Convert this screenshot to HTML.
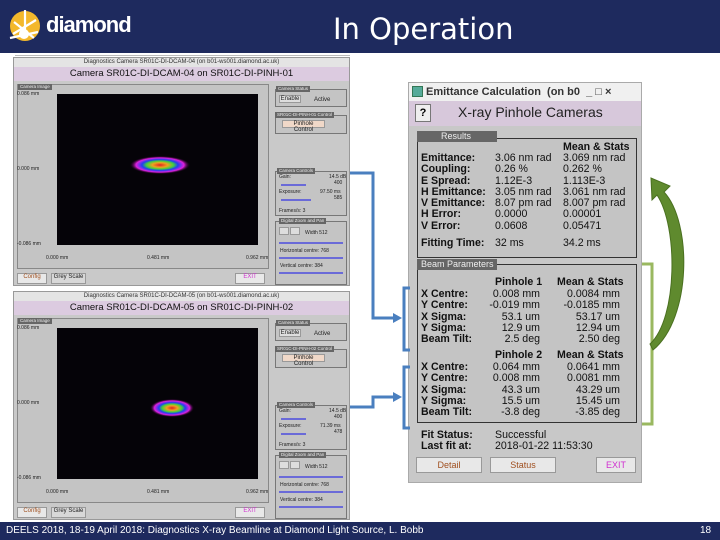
<!DOCTYPE html>
<html><head><meta charset="utf-8"><style>
*{margin:0;padding:0;box-sizing:border-box}
body{width:720px;height:540px;position:relative;background:#fff;font-family:"Liberation Sans",sans-serif;overflow:hidden}
.a{position:absolute}
.hdr{left:0;top:0;width:720px;height:53px;background:#1e2a5e}
.ftr{left:0;top:522px;width:720px;height:18px;background:#1e2a5e;color:#fff;font-size:10px;line-height:18px}
.cam{position:absolute;width:337px;height:229px;background:#c9c9c9;border:1px solid #999;font-size:5px;color:#222}
.cam .tb{position:absolute;left:0;top:0;width:100%;height:9px;background:#e4e4e4;font-size:6px;text-align:center;line-height:9px;color:#333}
.cam .ph{position:absolute;left:0;top:9px;width:100%;height:14px;background:#dccbe0;font-size:9.5px;text-align:center;line-height:14px;color:#111}
.cam .img{position:absolute;left:43px;top:36px;width:201px;height:151px;background:#050308}
.cam .grp{position:absolute;border:1px solid #777;background:#c4c4c4}
.cam .lab{position:absolute;background:#666;color:#eee;font-size:4.5px;padding:0 2px;height:6px;line-height:6px}
.sl{position:absolute;height:2px;background:#6a6ad8}
.btn{position:absolute;background:#e8e8e8;border:1px solid #999;font-size:6px;text-align:center}
.em{left:408px;top:82px;width:234px;height:401px;background:#c8c8c8;border:1px solid #aaa}
.t{position:absolute;font-size:10.6px;line-height:11.3px;color:#111;white-space:pre}
.b{font-weight:bold}
</style></head><body>
<div class="a hdr"></div>
<svg class="a" style="left:6px;top:8px" width="40" height="36" viewBox="0 0 40 36">
<circle cx="19" cy="18" r="15" fill="#f3b82c"/>
<g stroke="#fff" stroke-width="2.2"><line x1="19" y1="2" x2="19" y2="28"/><line x1="7" y1="26" x2="30" y2="12"/><line x1="8" y1="14" x2="28" y2="30"/><line x1="4" y1="30" x2="32" y2="24"/></g>
<circle cx="18" cy="26" r="5" fill="#fff"/>
</svg>
<div class="a" style="left:46px;top:12px;color:#fff;font-size:22px;font-weight:bold;letter-spacing:-1px">diamond</div>
<div class="a" style="left:333px;top:12px;color:#fff;font-size:29px;font-family:'DejaVu Sans',sans-serif">In Operation</div>
<div class="a" style="left:15px;top:55px;width:335px;height:1px;background:#bbb"></div>

<!-- camera 1 -->
<div class="cam" style="left:13px;top:57px">
<div class="tb">Diagnostics Camera SR01C-DI-DCAM-04 (on b01-ws001.diamond.ac.uk)</div>
<div class="ph">Camera SR01C-DI-DCAM-04 on SR01C-DI-PINH-01</div>
<div class="a" style="left:3px;top:26px;width:252px;height:185px;border:1px solid #888;background:#c4c4c4"></div>
<div class="lab" style="left:4px;top:26px">Camera Image</div>
<div class="img"><svg width="201" height="151"><defs><radialGradient id="g1" cx="50%" cy="50%" r="50%"><stop offset="0" stop-color="#e02020"/><stop offset=".25" stop-color="#f0a020"/><stop offset=".45" stop-color="#40d040"/><stop offset=".6" stop-color="#2040f0"/><stop offset=".8" stop-color="#e020e0"/><stop offset="1" stop-color="#300030" stop-opacity="0"/></radialGradient></defs><ellipse cx="103" cy="71" rx="30" ry="9" fill="url(#g1)"/></svg></div>
<div class="a" style="left:3px;top:33px">0.086 mm</div><div class="a" style="left:3px;top:108px">0.000 mm</div><div class="a" style="left:3px;top:183px">-0.086 mm</div>
<div class="a" style="left:32px;top:197px">0.000 mm</div><div class="a" style="left:133px;top:197px">0.481 mm</div><div class="a" style="left:232px;top:197px">0.962 mm</div>
<div class="btn" style="left:3px;top:215px;width:30px;height:11px;color:#a05020">Config</div>
<div class="btn" style="left:37px;top:215px;width:35px;height:11px;background:#d8d8d8">Grey Scale</div>
<div class="btn" style="left:221px;top:215px;width:30px;height:11px;color:#d030d0">EXIT</div>
<div class="grp" style="left:261px;top:31px;width:72px;height:18px"></div><div class="lab" style="left:262px;top:28px">Camera Status</div>
<div class="btn" style="left:265px;top:37px;width:22px;height:8px;background:#ddd">Enable</div><div class="a" style="left:300px;top:39px;font-size:6px">Active</div>
<div class="grp" style="left:261px;top:57px;width:72px;height:19px"></div><div class="lab" style="left:261px;top:54px">SR01C-DI-PINH-01 Control</div>
<div class="btn" style="left:268px;top:62px;width:43px;height:8px;background:#f0d8c8">Pinhole Control</div>
<div class="grp" style="left:261px;top:113px;width:72px;height:45px"></div><div class="lab" style="left:263px;top:110px">Camera Controls</div>
<div class="a" style="left:265px;top:116px">Gain:</div><div class="a" style="left:315px;top:116px">14.5 dB</div><div class="a" style="left:320px;top:122px">400</div>
<div class="sl" style="left:267px;top:126px;width:25px"></div>
<div class="a" style="left:265px;top:131px">Exposure:</div><div class="a" style="left:306px;top:131px">97.50 ms</div><div class="a" style="left:320px;top:137px">585</div>
<div class="sl" style="left:267px;top:141px;width:30px"></div>
<div class="a" style="left:265px;top:150px">Frames/s: 3</div>
<div class="grp" style="left:261px;top:163px;width:72px;height:64px"></div><div class="lab" style="left:265px;top:160px">Digital Zoom and Pan</div>
<div class="btn" style="left:265px;top:169px;width:10px;height:8px;background:#ddd"></div><div class="btn" style="left:276px;top:169px;width:10px;height:8px;background:#ddd"></div><div class="a" style="left:291px;top:172px">Width 512</div>
<div class="sl" style="left:265px;top:184px;width:64px"></div><div class="a" style="left:266px;top:190px">Horizontal centre: 768</div>
<div class="sl" style="left:265px;top:199px;width:64px"></div><div class="a" style="left:266px;top:205px">Vertical centre: 384</div>
<div class="sl" style="left:265px;top:214px;width:64px"></div>
</div>

<!-- camera 2 -->
<div class="cam" style="left:13px;top:291px">
<div class="tb">Diagnostics Camera SR01C-DI-DCAM-05 (on b01-ws001.diamond.ac.uk)</div>
<div class="ph">Camera SR01C-DI-DCAM-05 on SR01C-DI-PINH-02</div>
<div class="a" style="left:3px;top:26px;width:252px;height:185px;border:1px solid #888;background:#c4c4c4"></div>
<div class="lab" style="left:4px;top:26px">Camera Image</div>
<div class="img"><svg width="201" height="151"><defs><radialGradient id="g2" cx="50%" cy="50%" r="50%"><stop offset="0" stop-color="#e02020"/><stop offset=".25" stop-color="#f0a020"/><stop offset=".45" stop-color="#40d040"/><stop offset=".6" stop-color="#2040f0"/><stop offset=".8" stop-color="#e020e0"/><stop offset="1" stop-color="#300030" stop-opacity="0"/></radialGradient></defs><ellipse cx="115" cy="80" rx="22" ry="9" fill="url(#g2)"/></svg></div>
<div class="a" style="left:3px;top:33px">0.086 mm</div><div class="a" style="left:3px;top:108px">0.000 mm</div><div class="a" style="left:3px;top:183px">-0.086 mm</div>
<div class="a" style="left:32px;top:197px">0.000 mm</div><div class="a" style="left:133px;top:197px">0.481 mm</div><div class="a" style="left:232px;top:197px">0.962 mm</div>
<div class="btn" style="left:3px;top:215px;width:30px;height:11px;color:#a05020">Config</div>
<div class="btn" style="left:37px;top:215px;width:35px;height:11px;background:#d8d8d8">Grey Scale</div>
<div class="btn" style="left:221px;top:215px;width:30px;height:11px;color:#d030d0">EXIT</div>
<div class="grp" style="left:261px;top:31px;width:72px;height:18px"></div><div class="lab" style="left:262px;top:28px">Camera Status</div>
<div class="btn" style="left:265px;top:37px;width:22px;height:8px;background:#ddd">Enable</div><div class="a" style="left:300px;top:39px;font-size:6px">Active</div>
<div class="grp" style="left:261px;top:57px;width:72px;height:19px"></div><div class="lab" style="left:261px;top:54px">SR01C-DI-PINH-02 Control</div>
<div class="btn" style="left:268px;top:62px;width:43px;height:8px;background:#f0d8c8">Pinhole Control</div>
<div class="grp" style="left:261px;top:113px;width:72px;height:45px"></div><div class="lab" style="left:263px;top:110px">Camera Controls</div>
<div class="a" style="left:265px;top:116px">Gain:</div><div class="a" style="left:315px;top:116px">14.5 dB</div><div class="a" style="left:320px;top:122px">400</div>
<div class="sl" style="left:267px;top:126px;width:25px"></div>
<div class="a" style="left:265px;top:131px">Exposure:</div><div class="a" style="left:306px;top:131px">71.39 ms</div><div class="a" style="left:320px;top:137px">478</div>
<div class="sl" style="left:267px;top:141px;width:25px"></div>
<div class="a" style="left:265px;top:150px">Frames/s: 3</div>
<div class="grp" style="left:261px;top:163px;width:72px;height:64px"></div><div class="lab" style="left:265px;top:160px">Digital Zoom and Pan</div>
<div class="btn" style="left:265px;top:169px;width:10px;height:8px;background:#ddd"></div><div class="btn" style="left:276px;top:169px;width:10px;height:8px;background:#ddd"></div><div class="a" style="left:291px;top:172px">Width 512</div>
<div class="sl" style="left:265px;top:184px;width:64px"></div><div class="a" style="left:266px;top:190px">Horizontal centre: 768</div>
<div class="sl" style="left:265px;top:199px;width:64px"></div><div class="a" style="left:266px;top:205px">Vertical centre: 384</div>
<div class="sl" style="left:265px;top:214px;width:64px"></div>
</div>

<!-- emittance window -->
<div class="a em">
<div class="a" style="left:0;top:0;width:232px;height:18px;background:#f0f0f0;font-size:11px;font-weight:bold;line-height:18px;padding-left:17px;color:#333">Emittance Calculation&nbsp; (on b0 &nbsp;_ &#9633; ×</div>
<div class="a" style="left:3px;top:3px;width:11px;height:11px;background:#5a9;border:1px solid #375"></div>
<div class="a" style="left:0;top:18px;width:232px;height:25px;background:#d7c8db"></div>
<div class="a" style="left:6px;top:21px;width:16px;height:18px;background:#eee;border:1px solid #777;font-size:11px;font-weight:bold;text-align:center;line-height:17px">?</div>
<div class="a" style="left:49px;top:21px;font-size:14px;color:#222">X-ray Pinhole Cameras</div>
<div class="a" style="left:8px;top:55px;width:220px;height:120px;border:1px solid #333;background:#c4c4c4"></div>
<div class="a" style="left:8px;top:48px;width:80px;height:11px;background:#666;color:#eee;font-size:9px;line-height:11px;padding-left:24px">Results</div>
<div class="a" style="left:8px;top:181px;width:220px;height:159px;border:1px solid #333;background:#c4c4c4"></div>
<div class="a" style="left:8px;top:176px;width:80px;height:11px;background:#666;color:#eee;font-size:9px;line-height:11px;padding-left:4px">Beam Parameters</div>
</div>
<div class="t b" style="left:563px;top:142px">Mean &amp; Stats</div>
<div class="t b" style="left:421px;top:153px">Emittance:
Coupling:
E Spread:
H Emittance:
V Emittance:
H Error:
V Error:</div>
<div class="t" style="left:495px;top:153px">3.06 nm rad
0.26 %
1.12E-3
3.05 nm rad
8.07 pm rad
0.0000
0.0608</div>
<div class="t" style="left:563px;top:153px">3.069 nm rad
0.262 %
1.113E-3
3.061 nm rad
8.007 pm rad
0.00001
0.05471</div>
<div class="t b" style="left:421px;top:238px">Fitting Time:</div><div class="t" style="left:495px;top:238px">32 ms</div><div class="t" style="left:563px;top:238px">34.2 ms</div>

<div class="t b" style="left:495px;top:277px">Pinhole 1</div><div class="t b" style="left:557px;top:277px">Mean &amp; Stats</div>
<div class="t b" style="left:421px;top:289px">X Centre:
Y Centre:
X Sigma:
Y Sigma:
Beam Tilt:</div>
<div class="t" style="left:480px;top:289px;width:60px;text-align:right">0.008 mm
-0.019 mm
53.1 um
12.9 um
2.5 deg</div>
<div class="t" style="left:560px;top:289px;width:60px;text-align:right">0.0084 mm
-0.0185 mm
53.17 um
12.94 um
2.50 deg</div>
<div class="t b" style="left:495px;top:350px">Pinhole 2</div><div class="t b" style="left:557px;top:350px">Mean &amp; Stats</div>
<div class="t b" style="left:421px;top:362px">X Centre:
Y Centre:
X Sigma:
Y Sigma:
Beam Tilt:</div>
<div class="t" style="left:480px;top:362px;width:60px;text-align:right">0.064 mm
0.008 mm
43.3 um
15.5 um
-3.8 deg</div>
<div class="t" style="left:560px;top:362px;width:60px;text-align:right">0.0641 mm
0.0081 mm
43.29 um
15.45 um
-3.85 deg</div>
<div class="t b" style="left:421px;top:430px">Fit Status:
Last fit at:</div>
<div class="t" style="left:495px;top:430px">Successful
2018-01-22 11:53:30</div>
<div class="btn" style="left:416px;top:457px;width:66px;height:16px;font-size:9px;line-height:14px;color:#a05020">Detail</div>
<div class="btn" style="left:490px;top:457px;width:66px;height:16px;font-size:9px;line-height:14px;color:#a05020">Status</div>
<div class="btn" style="left:596px;top:457px;width:40px;height:16px;font-size:9px;line-height:14px;color:#d030d0">EXIT</div>

<svg class="a" style="left:0;top:0" width="720" height="540">
<g fill="none" stroke="#4a7fbf" stroke-width="3">
<polyline points="350,173 373,173 373,318 395,318"/>
<polyline points="410,288 404,288 404,350 410,350"/>
<polyline points="350,407 373,407 373,397 395,397"/>
<polyline points="410,367 404,367 404,428 410,428"/>
</g>
<polygon points="393,313 402,318 393,323" fill="#4a7fbf"/>
<polygon points="393,392 402,397 393,402" fill="#4a7fbf"/>
<polyline points="642,264 652,264 652,424 642,424" fill="none" stroke="#9ab860" stroke-width="3"/>
<path d="M653,350 C692,318 692,222 664,192 L670,186 L651,178 L652,200 L657,195 C678,226 678,318 650,344 Z" fill="#5f8a2e" stroke="#4a7020" stroke-width="1"/>
</svg>
<div class="a ftr"><span style="position:absolute;left:6px">DEELS 2018, 18-19 April 2018: Diagnostics X-ray Beamline at Diamond Light Source, L. Bobb</span><span style="position:absolute;left:700px">18</span></div>
</body></html>
